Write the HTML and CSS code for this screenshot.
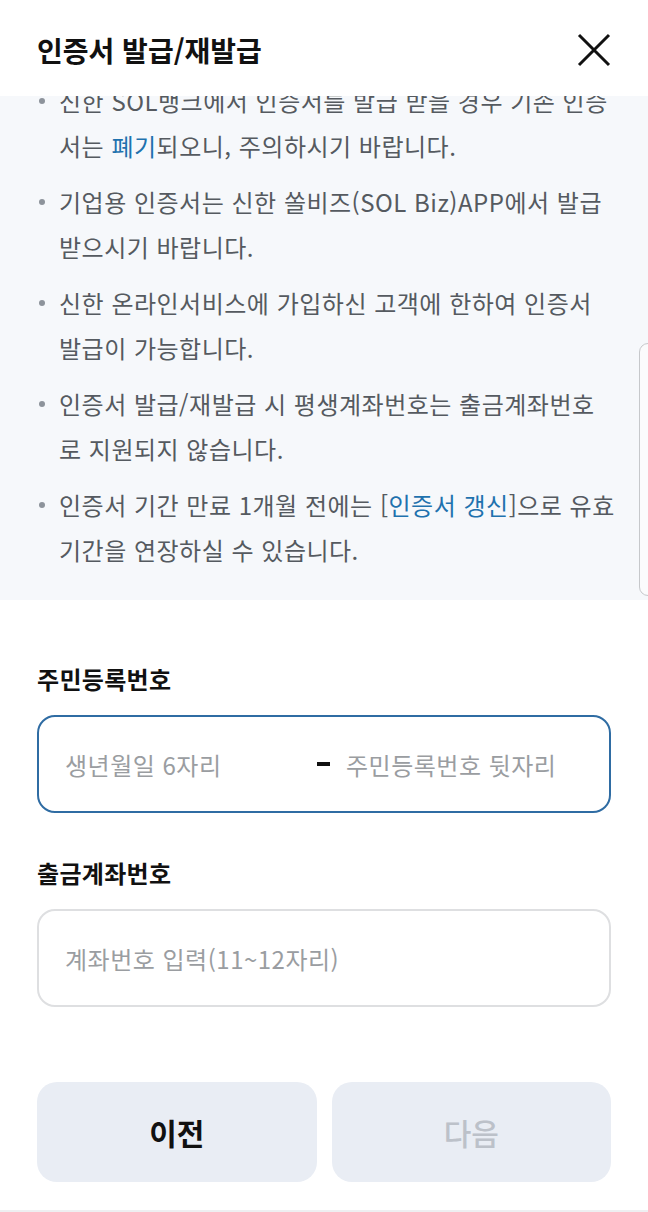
FILE: index.html
```html
<!DOCTYPE html>
<html lang="ko">
<head>
<meta charset="utf-8">
<title>인증서 발급/재발급</title>
<link rel="stylesheet" href="styles.css">
</head>
<body>
<div class="page">
  <header class="header">
    <h1 class="title">인증서 발급/재발급</h1>
    <button class="close" aria-label="닫기">
      <svg width="34" height="34" viewBox="0 0 34 34"><path d="M2 2 L32 32 M32 2 L2 32" stroke="#111" stroke-width="3" fill="none" stroke-linecap="butt"/></svg>
    </button>
  </header>

  <section class="notice">
    <ul class="notice-list">
      <li>신한 SOL뱅크에서 인증서를 발급 받을 경우 기존 인증<br>서는 <span class="link">폐기</span>되오니, 주의하시기 바랍니다.</li>
      <li>기업용 인증서는 신한 쏠비즈(SOL Biz)APP에서 발급<br>받으시기 바랍니다.</li>
      <li>신한 온라인서비스에 가입하신 고객에 한하여 인증서<br>발급이 가능합니다.</li>
      <li>인증서 발급/재발급 시 평생계좌번호는 출금계좌번호<br>로 지원되지 않습니다.</li>
      <li>인증서 기간 만료 1개월 전에는 [<span class="link">인증서 갱신</span>]으로 유효<br>기간을 연장하실 수 있습니다.</li>
    </ul>
  </section>

  <section class="form">
    <div class="field">
      <div class="label">주민등록번호</div>
      <div class="input input-active">
        <span class="ph ph-first">생년월일 6자리</span>
        <span class="dash"></span>
        <span class="ph">주민등록번호 뒷자리</span>
      </div>
    </div>
    <div class="field">
      <div class="label">출금계좌번호</div>
      <div class="input">
        <span class="ph">계좌번호 입력(11~12자리)</span>
      </div>
    </div>
  </section>

  <footer class="actions">
    <button class="btn btn-prev">이전</button>
    <button class="btn btn-next" disabled>다음</button>
  </footer>

  <div class="scroll-handle"></div>
</div>
</body>
</html>
```

FILE: styles.css
```css
* { box-sizing: border-box; }
html, body {
  margin: 0;
  padding: 0;
  background: #fff;
}
body {
  font-family: "Noto Sans CJK KR", "Noto Sans", sans-serif;
  color: #111;
}
.page {
  position: relative;
  width: 648px;
  height: 1212px;
  overflow: hidden;
  border-bottom: 2px solid #eeeff1;
}
.header {
  height: 96px;
  display: flex;
  align-items: center;
  justify-content: space-between;
  padding: 4px 37px 0 37px;
}
.title {
  margin: 0;
  font-size: 28px;
  font-weight: 700;
  letter-spacing: 0;
  color: #111;
  line-height: 1;
}
.close {
  border: 0;
  background: none;
  padding: 0;
  width: 34px;
  height: 34px;
  margin-right: 0;
}
.close svg { display: block; }

.notice {
  height: 504px;
  background: #f6f8fb;
  overflow: hidden;
}
.notice-list {
  list-style: none;
  margin: -18px 0 0 0;
  padding: 0 0 0 59px;
  display: flex;
  flex-direction: column;
  gap: 11px;
}
.notice-list li {
  position: relative;
  font-size: 24px;
  line-height: 45px;
  color: #555a60;
  white-space: nowrap;
  letter-spacing: 0.5px;
}
.notice-list li::before {
  content: "";
  position: absolute;
  left: -20px;
  top: 20px;
  width: 6px;
  height: 6px;
  border-radius: 50%;
  background: #8d939b;
}
.link { color: #1f72ae; }

.form {
  padding: 63px 37px 0 37px;
  display: flex;
  flex-direction: column;
  gap: 44px;
}
.field {
  display: flex;
  flex-direction: column;
  gap: 20px;
}
.label {
  font-size: 24px;
  font-weight: 700;
  line-height: 32px;
  color: #111;
  letter-spacing: 0.3px;
}
.input {
  height: 98px;
  border: 2px solid #dedfe1;
  border-radius: 18px;
  display: flex;
  align-items: center;
  padding: 0 26px;
}
.input-active {
  border-color: #2f6ca3;
}
.ph {
  font-size: 24px;
  color: #9a9da1;
  letter-spacing: 0.5px;
}
.ph-first {
  width: 252px;
}
.dash {
  width: 13px;
  height: 4px;
  background: #111;
  margin-right: 16px;
}

.actions {
  margin-top: 75px;
  padding: 0 37px;
  display: grid;
  grid-template-columns: 1fr 1fr;
  gap: 15px;
}
.btn {
  height: 100px;
  border: 0;
  border-radius: 20px;
  background: #e9edf4;
  font-family: "Noto Sans CJK KR", "Noto Sans", sans-serif;
  font-size: 30px;
  font-weight: 700;
  color: #111;
}
.btn-next {
  color: #bcc1c9;
  font-weight: 500;
}

.scroll-handle {
  position: absolute;
  right: -2px;
  top: 343px;
  width: 11px;
  height: 253px;
  border: 1px solid #c6c8cb;
  border-radius: 9px 0 0 9px;
  background: #fbfbfc;
}
```
